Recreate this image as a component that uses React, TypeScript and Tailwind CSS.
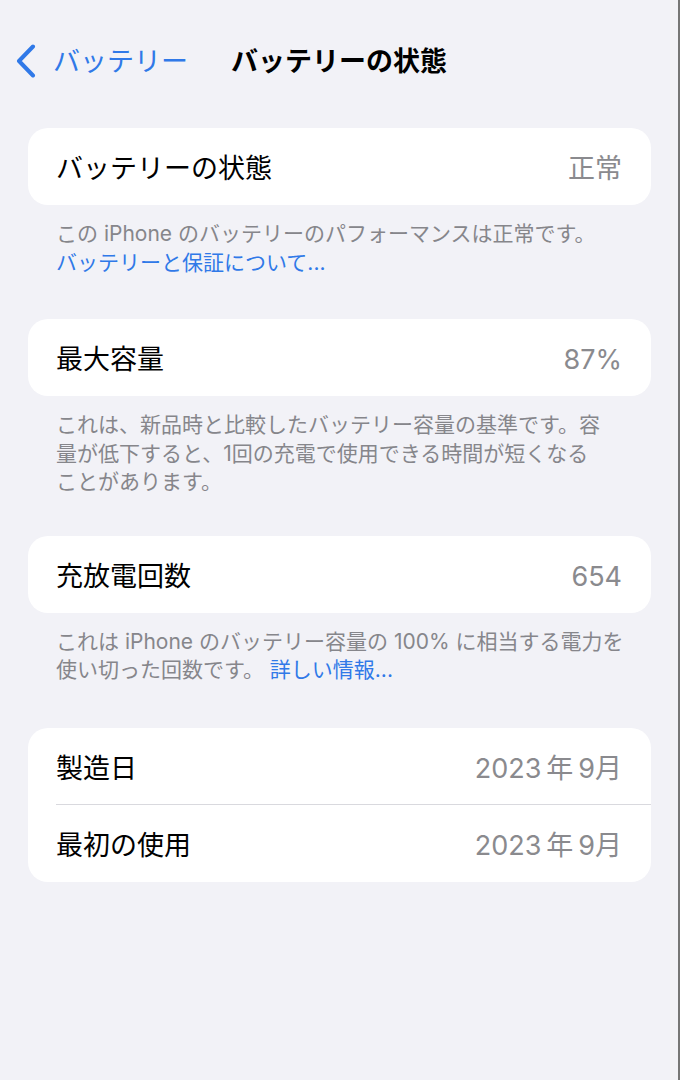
const FONT = { fontFamily: 'Inter, "Noto Sans CJK JP", sans-serif' };

function Row({ label, value, divider }: { label: string; value: string; divider?: boolean }) {
  return (
    <div className="relative flex h-[77px] items-center justify-between pl-[28px] pr-[29px] pt-[6px]">
      <span className="text-[27px] text-black">{label}</span>
      <span className="text-[27px] text-[#8a8a8e]">{value}</span>
      {divider && <div className="absolute bottom-0 left-[28px] right-0 h-px bg-[#d9d9de]" />}
    </div>
  );
}

function Card({ children, className = "" }: { children: React.ReactNode; className?: string }) {
  return <div className={`overflow-hidden rounded-[20px] bg-white ${className}`}>{children}</div>;
}

function Footer({ children }: { children: React.ReactNode }) {
  return (
    <p className="whitespace-nowrap px-[28px] pt-[15px] text-[21px] leading-[28.5px] text-[#86868b]">
      {children}
    </p>
  );
}

export default function App() {
  return (
    <div style={FONT} className="min-h-[1080px] w-full border-r-2 border-[#767676] bg-[#f2f2f7]">
      <div className="grid h-[120px] grid-cols-[1fr_auto_1fr] items-center pt-[4px]">
        <div className="flex items-center pl-[15px]">
          <svg width="22" height="34" viewBox="0 0 22 34" className="-mt-[2px]">
            <path
              d="M18 2.5 L4 17 L18 31.5"
              fill="none"
              stroke="#3079e8"
              strokeWidth="4"
              strokeLinecap="round"
              strokeLinejoin="round"
            />
          </svg>
          <span className="ml-[16px] text-[27px] text-[#3079e8]">バッテリー</span>
        </div>
        <h1 className="text-[27px] font-bold text-black">バッテリーの状態</h1>
        <div />
      </div>

      <div className="pl-[28px] pr-[27px] pt-[8px]">
        <Card>
          <Row label="バッテリーの状態" value="正常" />
        </Card>
        <Footer>
          この iPhone のバッテリーのパフォーマンスは正常です。
          <br />
          <span className="text-[#3079e8]">バッテリーと保証について...</span>
        </Footer>

        <Card className="mt-[42px]">
          <Row label="最大容量" value="87%" />
        </Card>
        <Footer>
          これは、新品時と比較したバッテリー容量の基準です。容
          <br />
          量が低下すると、1回の充電で使用できる時間が短くなる
          <br />
          ことがあります。
        </Footer>

        <Card className="mt-[39px]">
          <Row label="充放電回数" value="654" />
        </Card>
        <Footer>
          これは iPhone のバッテリー容量の 100% に相当する電力を
          <br />
          使い切った回数です。 <span className="text-[#3079e8]">詳しい情報...</span>
        </Footer>

        <Card className="mt-[43px]">
          <Row label="製造日" value={"2023\u202F年\u202F9月"} divider />
          <Row label="最初の使用" value={"2023\u202F年\u202F9月"} />
        </Card>
      </div>
    </div>
  );
}
